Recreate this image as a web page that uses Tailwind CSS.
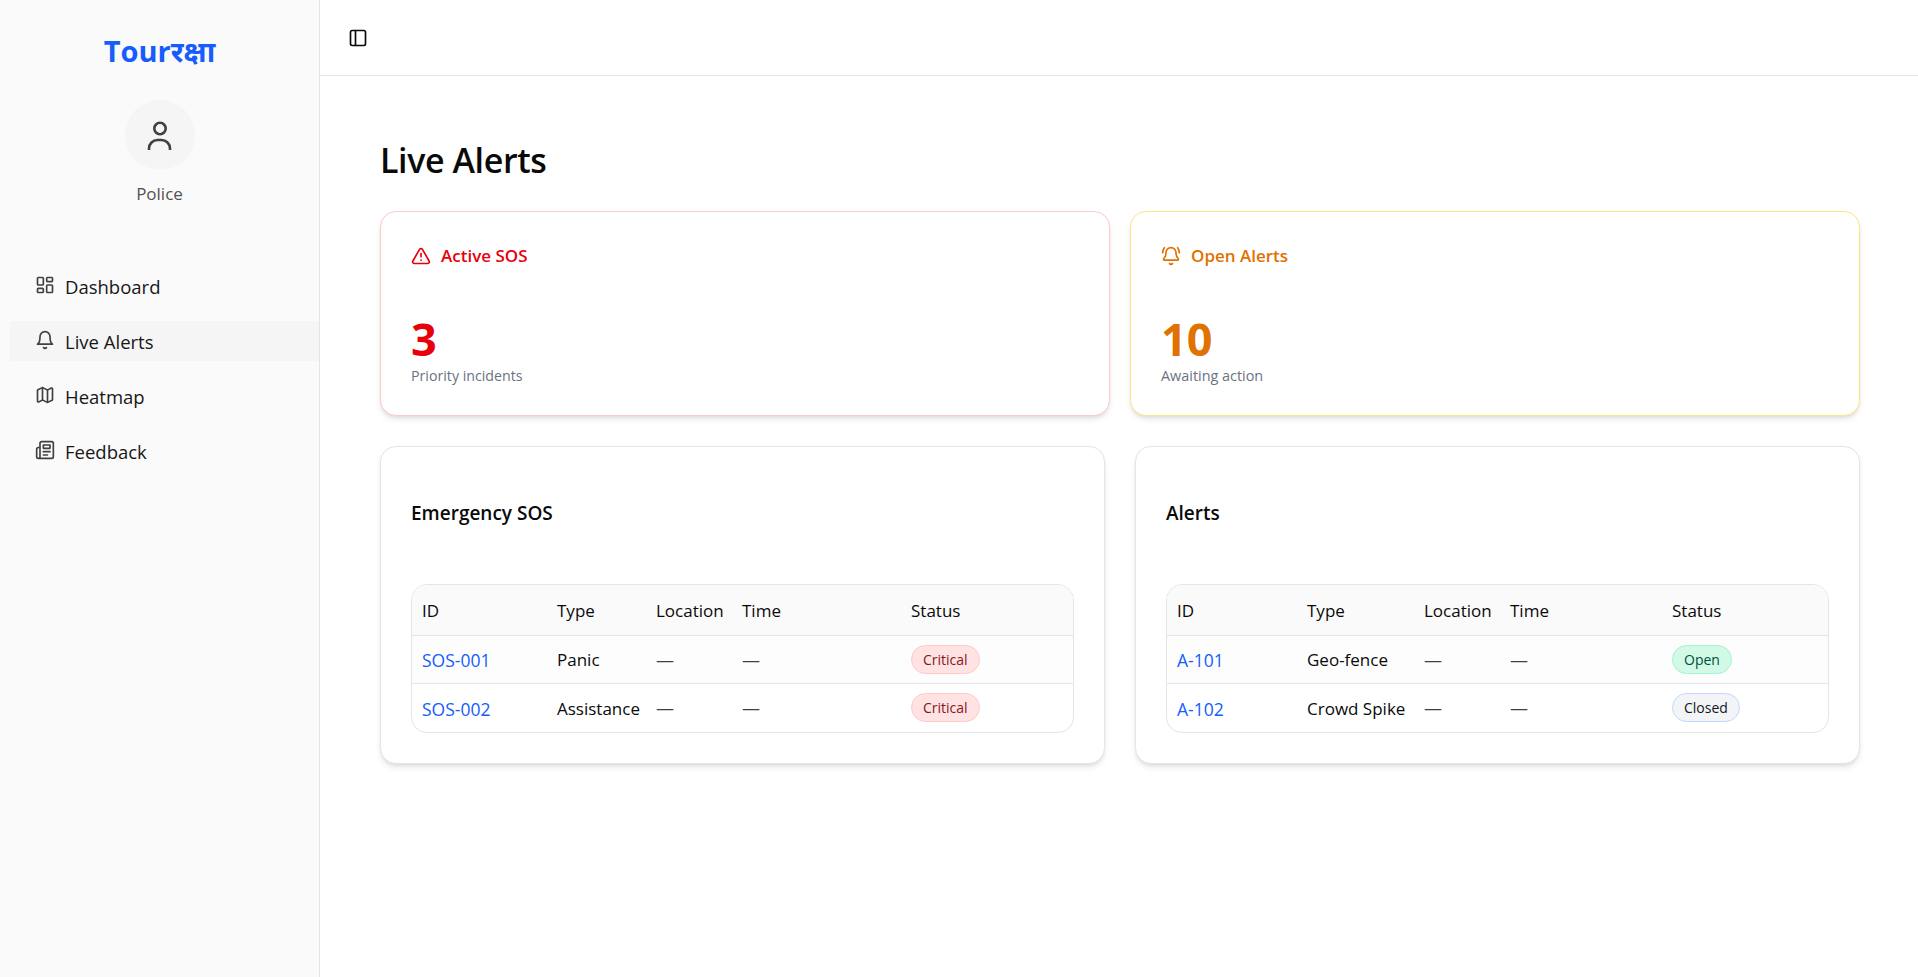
<!DOCTYPE html>
<html lang="en">
<head>
  <meta charset="UTF-8" />
  <meta name="viewport" content="width=device-width, initial-scale=1.0"/>
  <title>Live Alerts</title>
  <script src="https://cdn.jsdelivr.net/npm/@tailwindcss/browser@4"></script>
</head>
<body class="h-[977px] overflow-hidden bg-white text-[#0a0a0a] font-['Open_Sans','Noto_Sans',sans-serif] flex">

  <!-- Sidebar -->
  <aside class="w-[320px] shrink-0 bg-[#fafafa] border-r border-[#e5e5e5] flex flex-col">
    <div class="flex flex-col items-center pt-[30px]">
      <h1 class="text-[29px] leading-[42px] font-bold text-[#155dfc]">Tourरक्षा</h1>
      <div class="mt-[28px] w-[70px] h-[70px] rounded-full bg-[#f5f5f5] flex items-center justify-center">
        <svg xmlns="http://www.w3.org/2000/svg" class="w-9 h-9 text-[#404040]" fill="none" viewBox="0 0 36 36" stroke="currentColor" stroke-width="2.6">
          <circle cx="18" cy="11.500" r="5.700"/><path d="M7 33v-1.500a8.500 8.500 0 0 1 8.500-8.500h4a8.500 8.500 0 0 1 8.500 8.500v1.500"/>
        </svg>
      </div>
      <p class="mt-[12px] text-[17px] leading-6 text-[#525252]">Police</p>
    </div>

    <nav class="mt-[60px] flex flex-col gap-[15px] pl-[10px] text-[18.5px]">
      <a href="#" class="h-10 pt-[2px] flex items-center gap-[10px] pl-[25px] text-[#171717]">
        <svg xmlns="http://www.w3.org/2000/svg" class="w-5 h-5 text-[#404040] -mt-[5px]" fill="none" viewBox="0 0 24 24" stroke="currentColor" stroke-width="2" stroke-linecap="round" stroke-linejoin="round">
          <rect width="7" height="9" x="3" y="3" rx="1"/><rect width="7" height="5" x="14" y="3" rx="1"/><rect width="7" height="9" x="14" y="12" rx="1"/><rect width="7" height="5" x="3" y="16" rx="1"/>
        </svg>
        Dashboard
      </a>
      <a href="#" class="h-10 pt-[2px] flex items-center gap-[10px] pl-[25px] text-[#171717] bg-[#f5f5f5]">
        <svg xmlns="http://www.w3.org/2000/svg" class="w-5 h-5 text-[#404040] -mt-[5px]" fill="none" viewBox="0 0 24 24" stroke="currentColor" stroke-width="2" stroke-linecap="round" stroke-linejoin="round">
          <path d="M6 8a6 6 0 0 1 12 0c0 7 3 9 3 9H3s3-2 3-9"/><path d="M10.3 21a1.94 1.94 0 0 0 3.4 0"/>
        </svg>
        Live Alerts
      </a>
      <a href="#" class="h-10 pt-[2px] flex items-center gap-[10px] pl-[25px] text-[#171717]">
        <svg xmlns="http://www.w3.org/2000/svg" class="w-5 h-5 text-[#404040] -mt-[5px]" fill="none" viewBox="0 0 24 24" stroke="currentColor" stroke-width="2" stroke-linecap="round" stroke-linejoin="round">
          <path d="M14.106 5.553a2 2 0 0 0 1.788 0l3.659-1.83A1 1 0 0 1 21 4.619v12.764a1 1 0 0 1-.553.894l-4.553 2.277a2 2 0 0 1-1.788 0l-4.212-2.106a2 2 0 0 0-1.788 0l-3.659 1.83A1 1 0 0 1 3 19.381V6.618a1 1 0 0 1 .553-.894l4.553-2.277a2 2 0 0 1 1.788 0z"/><path d="M15 5.764v15"/><path d="M9 3.236v15"/>
        </svg>
        Heatmap
      </a>
      <a href="#" class="h-10 pt-[2px] flex items-center gap-[10px] pl-[25px] text-[#171717]">
        <svg xmlns="http://www.w3.org/2000/svg" class="w-5 h-5 text-[#404040] -mt-[5px]" fill="none" viewBox="0 0 24 24" stroke="currentColor" stroke-width="2" stroke-linecap="round" stroke-linejoin="round">
          <path d="M4 22h16a2 2 0 0 0 2-2V4a2 2 0 0 0-2-2H8a2 2 0 0 0-2 2v16a2 2 0 0 1-2 2Zm0 0a2 2 0 0 1-2-2v-9c0-1.1.9-2 2-2h2"/><path d="M18 14h-8"/><path d="M15 18h-5"/><path d="M10 6h8v4h-8V6Z"/>
        </svg>
        Feedback
      </a>
    </nav>
  </aside>

  <div class="flex-1 min-w-0 flex flex-col">
    <!-- Top bar -->
    <header class="h-[76px] shrink-0 border-b border-[#e5e5e5] flex items-center pl-[28px]">
      <svg xmlns="http://www.w3.org/2000/svg" class="w-5 h-5 text-[#0a0a0a]" fill="none" viewBox="0 0 24 24" stroke="currentColor" stroke-width="2" stroke-linecap="round" stroke-linejoin="round">
        <rect width="18" height="18" x="3" y="3" rx="2"/><path d="M9 3v18"/>
      </svg>
    </header>

    <main class="pl-[60px] pr-[58px] pt-[57px]">
      <h2 class="text-[34px] leading-[54px] tracking-[-0.4px] font-semibold text-[#0a0a0a]">Live Alerts</h2>

      <!-- Summary cards -->
      <div class="mt-[24px] grid grid-cols-2 gap-5">
        <section class="h-[205px] rounded-2xl border border-[#ffc9c9] bg-white shadow-md px-[30px] pt-[30px]">
          <div class="flex items-center gap-[10px] text-[#e7000b] text-[17px] leading-[27px] font-semibold">
            <svg xmlns="http://www.w3.org/2000/svg" class="w-5 h-5" fill="none" viewBox="0 0 24 24" stroke="currentColor" stroke-width="2" stroke-linecap="round" stroke-linejoin="round">
              <path d="m21.73 18-8-14a2 2 0 0 0-3.48 0l-8 14A2 2 0 0 0 4 21h16a2 2 0 0 0 1.73-3"/><path d="M12 9v4"/><path d="M12 17h.01"/>
            </svg>
            Active SOS
          </div>
          <p class="mt-[46px] text-[45px] leading-[48px] font-bold text-[#e7000b]">3</p>
          <p class="mt-px text-[14.2px] leading-6 text-[#6a7282]">Priority incidents</p>
        </section>
        <section class="h-[205px] rounded-2xl border border-[#fee685] bg-white shadow-md px-[30px] pt-[30px]">
          <div class="flex items-center gap-[10px] text-[#e17100] text-[17px] leading-[27px] font-semibold">
            <svg xmlns="http://www.w3.org/2000/svg" class="w-5 h-5" fill="none" viewBox="0 0 24 24" stroke="currentColor" stroke-width="2" stroke-linecap="round" stroke-linejoin="round">
              <path d="M10.268 21a2 2 0 0 0 3.464 0"/><path d="M22 8c0-2.3-.8-4.3-2-6"/><path d="M3.262 15.326A1 1 0 0 0 4 17h16a1 1 0 0 0 .74-1.673C19.41 13.956 18 12.499 18 8A6 6 0 0 0 6 8c0 4.499-1.411 5.956-2.738 7.326"/><path d="M4 2C2.800 3.700 2 5.700 2 8"/>
            </svg>
            Open Alerts
          </div>
          <p class="mt-[46px] text-[45px] leading-[48px] font-bold text-[#e17100]">10</p>
          <p class="mt-px text-[14.4px] leading-6 text-[#6a7282]">Awaiting action</p>
        </section>
      </div>

      <!-- Tables -->
      <div class="mt-[30px] grid grid-cols-2 gap-[30px]">
        <section class="h-[318px] rounded-2xl border border-[#e5e5e5] bg-white shadow-md px-[30px] pt-[53px]">
          <h3 class="text-[19px] leading-[27px] font-semibold">Emergency SOS</h3>
          <div class="mt-[57px] rounded-2xl border border-[#e5e5e5] overflow-hidden">
            <table class="w-full table-fixed text-[17px] text-left [&_th]:pt-[2px] [&_td:not(:last-child)]:pt-[2px]">
              <colgroup>
                <col class="w-[135px]"/><col class="w-[99px]"/><col class="w-[86px]"/><col class="w-[169px]"/><col/>
              </colgroup>
              <thead class="bg-[#fafafa]">
                <tr class="h-[50px] border-b border-[#e5e5e5]">
                  <th class="pl-[10px] font-normal">ID</th>
                  <th class="pl-[10px] font-normal">Type</th>
                  <th class="pl-[10px] font-normal">Location</th>
                  <th class="pl-[10px] font-normal">Time</th>
                  <th class="pl-[10px] font-normal">Status</th>
                </tr>
              </thead>
              <tbody>
                <tr class="h-[48px] border-b border-[#e5e5e5] bg-[#fdfdfd]">
                  <td class="pl-[10px]"><a href="#" class="text-[#155dfc] text-[17.5px]">SOS-001</a></td>
                  <td class="pl-[10px]">Panic</td>
                  <td class="pl-[10px] text-[#404040] text-[18px]">—</td>
                  <td class="pl-[10px] text-[#404040] text-[18px]">—</td>
                  <td class="pl-[10px]"><span class="inline-flex h-[29px] items-center px-[11px] rounded-full border border-[#ffc9c9] bg-[#ffe2e2] text-[#82181a] text-[14px]">Critical</span></td>
                </tr>
                <tr class="h-[49px]">
                  <td class="pl-[10px]"><a href="#" class="text-[#155dfc] text-[17.5px]">SOS-002</a></td>
                  <td class="pl-[10px]">Assistance</td>
                  <td class="pl-[10px] text-[#404040] text-[18px]">—</td>
                  <td class="pl-[10px] text-[#404040] text-[18px]">—</td>
                  <td class="pl-[10px]"><span class="inline-flex h-[29px] items-center px-[11px] rounded-full border border-[#ffc9c9] bg-[#ffe2e2] text-[#82181a] text-[14px]">Critical</span></td>
                </tr>
              </tbody>
            </table>
          </div>
        </section>

        <section class="h-[318px] rounded-2xl border border-[#e5e5e5] bg-white shadow-md px-[30px] pt-[53px]">
          <h3 class="text-[19px] leading-[27px] font-semibold">Alerts</h3>
          <div class="mt-[57px] rounded-2xl border border-[#e5e5e5] overflow-hidden">
            <table class="w-full table-fixed text-[17px] text-left [&_th]:pt-[2px] [&_td:not(:last-child)]:pt-[2px]">
              <colgroup>
                <col class="w-[130px]"/><col class="w-[117px]"/><col class="w-[86px]"/><col class="w-[162px]"/><col/>
              </colgroup>
              <thead class="bg-[#fafafa]">
                <tr class="h-[50px] border-b border-[#e5e5e5]">
                  <th class="pl-[10px] font-normal">ID</th>
                  <th class="pl-[10px] font-normal">Type</th>
                  <th class="pl-[10px] font-normal">Location</th>
                  <th class="pl-[10px] font-normal">Time</th>
                  <th class="pl-[10px] font-normal">Status</th>
                </tr>
              </thead>
              <tbody>
                <tr class="h-[48px] border-b border-[#e5e5e5] bg-[#fdfdfd]">
                  <td class="pl-[10px]"><a href="#" class="text-[#155dfc] text-[17.5px]">A-101</a></td>
                  <td class="pl-[10px]">Geo-fence</td>
                  <td class="pl-[10px] text-[#404040] text-[18px]">—</td>
                  <td class="pl-[10px] text-[#404040] text-[18px]">—</td>
                  <td class="pl-[10px]"><span class="inline-flex h-[29px] items-center px-[11px] rounded-full border border-[#a4f4cf] bg-[#d0fae5] text-[#004f3b] text-[14px]">Open</span></td>
                </tr>
                <tr class="h-[49px]">
                  <td class="pl-[10px]"><a href="#" class="text-[#155dfc] text-[17.5px]">A-102</a></td>
                  <td class="pl-[10px]">Crowd Spike</td>
                  <td class="pl-[10px] text-[#404040] text-[18px]">—</td>
                  <td class="pl-[10px] text-[#404040] text-[18px]">—</td>
                  <td class="pl-[10px]"><span class="inline-flex h-[29px] items-center px-[11px] rounded-full border border-[#bedbff] bg-[#f3f4f6] text-[#101828] text-[14px]">Closed</span></td>
                </tr>
              </tbody>
            </table>
          </div>
        </section>
      </div>
    </main>
  </div>

</body>
</html>
